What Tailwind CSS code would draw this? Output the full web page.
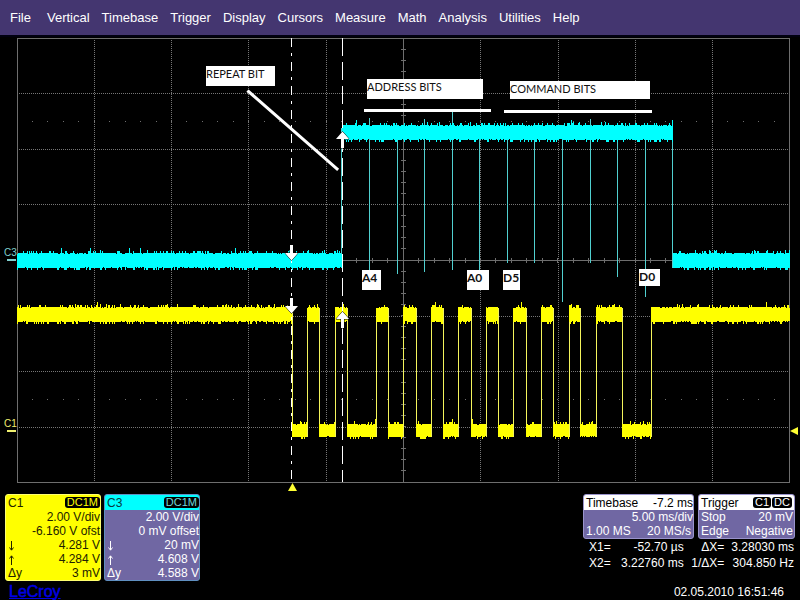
<!DOCTYPE html>
<html lang="en">
<head>
<meta charset="utf-8">
<meta name="viewport" content="width=device-width, initial-scale=1">
<title>LeCroy oscilloscope</title>
<script src="https://cdn.jsdelivr.net/npm/@tailwindcss/browser@4"></script>
</head>
<body class="min-h-screen bg-black font-['Liberation_Sans',Arial,sans-serif] text-[12px] leading-[14px] text-white">
<nav class="flex items-center gap-[12px] bg-[#443670] px-[10px] py-[9px] text-[13px] leading-[17px]" aria-label="Main menu">
  <button type="button" class="mr-1">File</button>
  <button type="button">Vertical</button>
  <button type="button">Timebase</button>
  <button type="button">Trigger</button>
  <button type="button">Display</button>
  <button type="button">Cursors</button>
  <button type="button">Measure</button>
  <button type="button">Math</button>
  <button type="button">Analysis</button>
  <button type="button">Utilities</button>
  <button type="button">Help</button>
</nav>

<main>
<svg class="block w-full" viewBox="0 35 800 456" role="img" aria-label="Waveform display">
  <rect x="0" y="35" width="800" height="2" fill="#00000f"/>
  <g fill="none" stroke="#6e6e6e" shape-rendering="crispEdges">
    <path id="dotted" stroke="#767676" stroke-dasharray="1 1"/>
    <path id="solid"/>
    <path id="specks"/>
  </g>

  <g shape-rendering="crispEdges" fill="none">
    <path id="c3spikes" stroke="#50d0d0"/>
    <path id="c3" stroke="#00ffff"/>
    <path id="c1edges" stroke="#f4f45c"/>
    <path id="c1" stroke="#ffff00"/>
  </g>

  <g stroke="#fff" shape-rendering="crispEdges" fill="none">
    <path d="M291.5 38V482" stroke-dasharray="9 6 3 6"/>
    <path d="M342.5 38V482" stroke-dasharray="18 6"/>
  </g>
  <g fill="#fff" stroke="#000" stroke-width="1" paint-order="stroke">
    <path d="M290 245h3v8h5l-6.500 7.500l-6.500-7.500h5z"/>
    <path d="M290 298h3v8h5l-6.500 7.500l-6.500-7.500h5z"/>
    <path d="M341 148h3v-9h5l-6.500-7.500l-6.500 7.500h5z"/>
    <path d="M341 328h3v-9h5l-6.500-7.500l-6.500 7.500h5z"/>
  </g>

  <g stroke="#fff" stroke-width="3" fill="none">
    <path d="M248.500 91.500L337 169" stroke-linecap="square" />
    <path d="M364 110.500H491M504 111.500H652" />
  </g>
  <g fill="#fff">
    <rect x="206" y="66" width="69" height="20"/>
    <rect x="367" y="79" width="116" height="20"/>
    <rect x="510" y="81" width="140" height="18"/>
    <rect x="362" y="270" width="19" height="20"/>
    <rect x="467" y="270" width="22" height="20"/>
    <rect x="503" y="270" width="17" height="20"/>
    <rect x="639" y="269" width="21" height="17"/>
  </g>
  <g class="font-[Lato,'Open_Sans',sans-serif] text-[11px]" fill="#111">
    <text x="206" y="78">REPEAT BIT</text>
    <text x="367" y="91">ADDRESS BITS</text>
    <text x="510" y="93">COMMAND BITS</text>
    <g class="text-[12px] font-bold">
      <text x="362" y="282">A4</text>
      <text x="467" y="282">A0</text>
      <text x="503" y="282">D5</text>
      <text x="639" y="281">D0</text>
    </g>
  </g>

  <g class="text-[10px]">
    <text x="4" y="256" fill="#7fd0d0">C3</text>
    <text x="4" y="427" fill="#f0f070">C1</text>
  </g>
  <rect x="7" y="259" width="9" height="2" fill="#7fd0d0"/>
  <rect x="7" y="430" width="9" height="2" fill="#f0f070"/>
  <path d="M798 427v8l-8-4z" fill="#ffff33"/>
  <path d="M288 491h9l-4.500-8z" fill="#ffff33"/>
</svg>
</main>

<footer class="flex flex-wrap items-start justify-between px-[5px] pt-[3px]">
  <div>
    <div class="flex gap-[3px]">
      <section class="w-24 rounded-[3px] border border-[#ffff70] bg-[#ffff00] text-[#222200]" aria-label="Channel 1">
        <header class="flex h-[15px] items-center justify-between pl-[2px]">
          <h2 class="leading-[14px]">C1</h2>
          <span class="rounded-[3px] bg-black px-[2px] text-[11px] leading-[11px] text-[#ffff00]">DC1M</span>
        </header>
        <p class="text-right">2.00 V/div</p>
        <p class="text-right">-6.160 V ofst</p>
        <dl class="grid grid-cols-[auto_1fr] pl-[2px]">
          <dt aria-label="Level at cursor 1"><svg class="mt-[3px] ml-px h-[10px] w-[6px]" viewBox="0 0 6 10" fill="none" stroke="currentColor"><path d="M2.500 0V9M0.500 6.500L2.500 9.200L4.500 6.500"/></svg></dt><dd class="text-right">4.281 V</dd>
          <dt aria-label="Level at cursor 2"><svg class="mt-[3px] ml-px h-[10px] w-[6px]" viewBox="0 0 6 10" fill="none" stroke="currentColor"><path d="M2.500 10V1M0.500 3.500L2.500 0.800L4.500 3.500"/></svg></dt><dd class="text-right">4.284 V</dd>
          <dt>Δy</dt><dd class="text-right">3 mV</dd>
        </dl>
      </section>
      <section class="w-24 rounded-[3px] border border-[#5f8fc0] bg-[#7067a3]" aria-label="Channel 3">
        <header class="flex h-[15px] items-center justify-between rounded-t-[2px] bg-[#00ffff] pl-[2px] text-[#083840]">
          <h2 class="leading-[14px]">C3</h2>
          <span class="rounded-[3px] bg-black px-[2px] text-[11px] leading-[11px] text-[#70d8d8]">DC1M</span>
        </header>
        <p class="text-right">2.00 V/div</p>
        <p class="text-right">0 mV offset</p>
        <dl class="grid grid-cols-[auto_1fr] pl-[2px]">
          <dt aria-label="Level at cursor 1"><svg class="mt-[3px] ml-px h-[10px] w-[6px]" viewBox="0 0 6 10" fill="none" stroke="currentColor"><path d="M2.500 0V9M0.500 6.500L2.500 9.200L4.500 6.500"/></svg></dt><dd class="text-right">20 mV</dd>
          <dt aria-label="Level at cursor 2"><svg class="mt-[3px] ml-px h-[10px] w-[6px]" viewBox="0 0 6 10" fill="none" stroke="currentColor"><path d="M2.500 10V1M0.500 3.500L2.500 0.800L4.500 3.500"/></svg></dt><dd class="text-right">4.608 V</dd>
          <dt>Δy</dt><dd class="text-right">4.588 V</dd>
        </dl>
      </section>
    </div>
    <a href="#" class="ml-1 mt-[2px] block w-fit text-[16px] leading-[17px] text-[#0000e6] underline decoration-1 underline-offset-1 [-webkit-text-stroke:0.5px_#0000e6]">LeCroy</a>
  </div>

  <div class="w-[212px]">
    <div class="flex gap-1">
      <section class="w-[111px] rounded-[3px] border border-[#9a94cc] bg-[#7067a3]" aria-label="Timebase">
        <header class="flex h-[15px] items-center justify-between rounded-t-[2px] bg-white pl-[2px] text-black">
          <h2>Timebase</h2><span>-7.2 ms</span>
        </header>
        <p class="text-right">5.00 ms/div</p>
        <p class="flex justify-between px-[2px]"><span>1.00 MS</span><span>20 MS/s</span></p>
      </section>
      <section class="w-[97px] rounded-[3px] border border-[#9a94cc] bg-[#7067a3]" aria-label="Trigger">
        <header class="flex h-[15px] items-center justify-between rounded-t-[2px] bg-white px-[2px] text-black">
          <h2>Trigger</h2>
          <span class="flex gap-px text-[11px] leading-[11px] text-white"><span class="rounded-[3px] bg-black px-[2px]">C1</span><span class="rounded-[3px] bg-black px-[2px]">DC</span></span>
        </header>
        <p class="flex justify-between pr-px pl-[2px]"><span>Stop</span><span>20 mV</span></p>
        <p class="flex justify-between pr-px pl-[2px]"><span>Edge</span><span>Negative</span></p>
      </section>
    </div>
    <table class="w-full leading-[16px]">
      <tbody>
        <tr><th class="pl-[6px] text-left font-normal">X1=</th><td class="pr-1 text-right">-52.70 µs</td><th class="text-right font-normal">ΔX=</th><td class="pr-px text-right">3.28030 ms</td></tr>
        <tr><th class="pl-[6px] text-left font-normal">X2=</th><td class="pr-1 text-right">3.22760 ms</td><th class="text-right font-normal">1/ΔX=</th><td class="pr-px text-right">304.850 Hz</td></tr>
      </tbody>
    </table>
    <p class="pt-[14px] pr-[11px] text-right"><time datetime="2010-05-02T16:51:46">02.05.2010 16:51:46</time></p>
  </div>
</footer>

<script>
const set = (id, d) => document.getElementById(id).setAttribute('d', d);

// Graticule: ten divisions across, eight down
const X0 = 17, Y0 = 38;
let dotted = '', solid = 'M17.5 38.5H789.5V482.5H17.5ZM403.5 38V482M17 260.5H789', specks = '';
for (const x of [94, 171, 248, 326, 480, 558, 635, 712]) dotted += `M${x + 0.5} 40V482`;
for (const y of [93, 149, 204, 316, 371, 427]) dotted += `M19 ${y + 0.5}H789`;
for (let i = 1; i < 40; i++) solid += `M401 ${Math.floor(Y0 + i * 11.1) + 0.5}h5`;
for (let i = 1; i < 50; i++) {
  const x = Math.floor(X0 + i * 15.45);
  solid += `M${x + 0.5} 258v5`;
  specks += `M${x} 121.500h1M${x} 399.500h1`;
}
set('dotted', dotted); set('solid', solid); set('specks', specks);

// Noise band: one vertical stroke per column with a ragged top and bottom
let seed = 7;
const rnd = () => (seed = (seed * 16807) % 2147483647) / 2147483647;
const rag = () => { const r = rnd(); return r < 0.14 ? -1 : r < 0.8 ? 0 : r < 0.96 ? 2 : r < 0.99 ? 3 : 5; };
const band = (a, b, top, bottom) => {
  let d = '';
  for (let x = a; x < b; x++) d += `M${x + 0.5} ${top - rag()}V${bottom + Math.min(rag(), 2)}`;
  return d;
};

set('c3', band(17, 342, 253, 268) + band(342, 673, 125, 140) + band(673, 790, 253, 268));
const spikes = [[369,118,270],[397,125,274],[424,119,272],[452,112,270],[479,125,270],[507,125,263],[534,125,263],[562,125,302],[590,119,263],[617,125,277],[645,125,297],[341,128,268],[672,125,268]];
set('c3spikes', spikes.map(([x, a, b]) => `M${x + 0.5} ${a}V${b}`).join(''));

const edges = [17,292,307,319,335,347,376,388,403,416,431,443,458,471,486,498,513,526,541,553,569,580,596,622,651,790];
let c1 = '', c1edges = '';
for (let i = 0; i < edges.length - 1; i++) {
  const high = i % 2 === 0;
  c1 += high ? band(edges[i], edges[i + 1], 307, 322) : band(edges[i], edges[i + 1], 424, 437);
  if (i) c1edges += `M${edges[i] + 0.5} 308V437`;
}
set('c1', c1); set('c1edges', c1edges);
</script>
</body>
</html>
